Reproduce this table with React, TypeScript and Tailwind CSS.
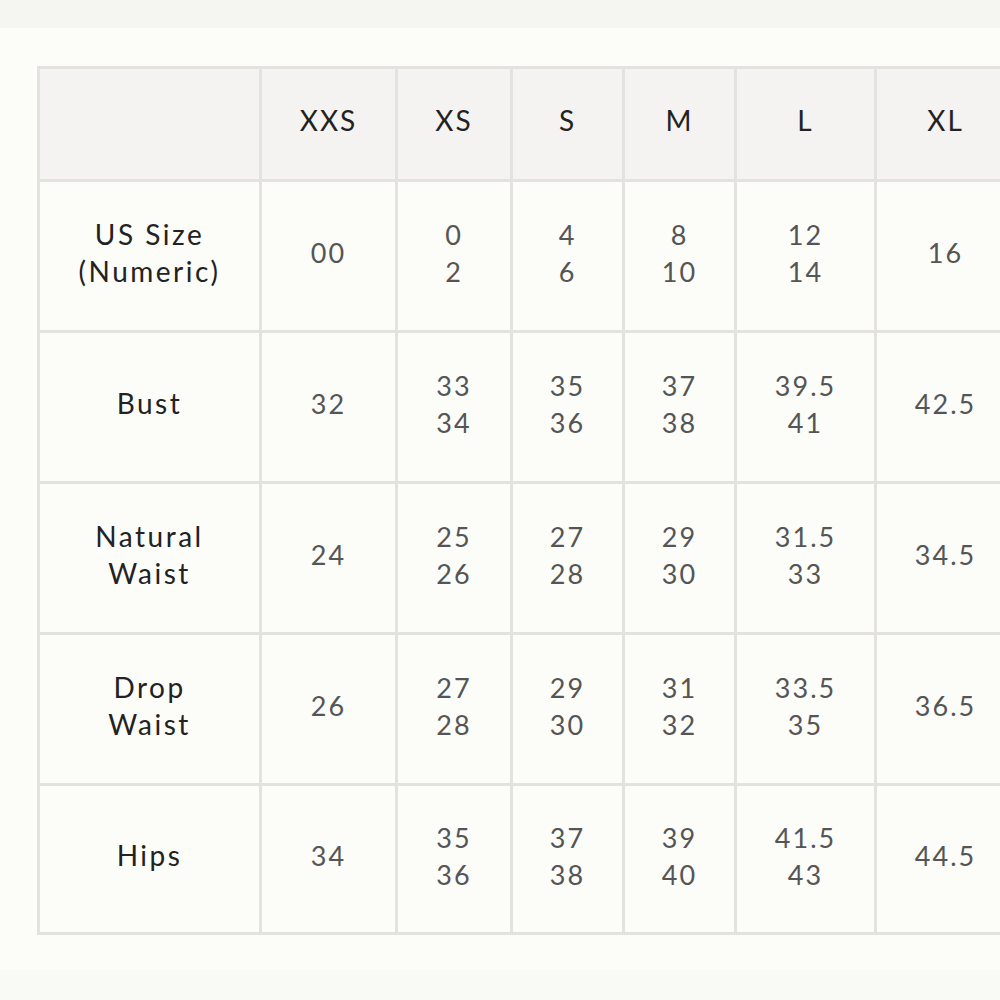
import React from "react";

const headers = ["", "XXS", "XS", "S", "M", "L", "XL"];
const rows: { label: string[]; values: string[][] }[] = [
  { label: ["US Size", "(Numeric)"], values: [["00"], ["0", "2"], ["4", "6"], ["8", "10"], ["12", "14"], ["16"]] },
  { label: ["Bust"], values: [["32"], ["33", "34"], ["35", "36"], ["37", "38"], ["39.5", "41"], ["42.5"]] },
  { label: ["Natural", "Waist"], values: [["24"], ["25", "26"], ["27", "28"], ["29", "30"], ["31.5", "33"], ["34.5"]] },
  { label: ["Drop", "Waist"], values: [["26"], ["27", "28"], ["29", "30"], ["31", "32"], ["33.5", "35"], ["36.5"]] },
  { label: ["Hips"], values: [["34"], ["35", "36"], ["37", "38"], ["39", "40"], ["41.5", "43"], ["44.5"]] },
];

export default function App() {
  return (
    <div className="w-[1000px] h-[1000px] overflow-hidden bg-[#fcfcf9] flex flex-col" style={{ fontFamily: "Lato, 'Open Sans', sans-serif" }}>
      <div className="h-[28px] bg-[#f5f5f2] shrink-0" />
      <div className="pl-[37px] pt-[38px]">
        <div className="grid w-max bg-[#e3e2df] p-[3px] gap-[3px] grid-cols-[219px_133px_112px_109px_109px_137px_137px] grid-rows-[110px_148px_148px_148px_148px_146px]">
          {headers.map((h, i) => (
            <div key={i} className="bg-[#f4f3f1] flex items-center justify-center text-[28px] tracking-[2px] text-[#222] pb-[8px]">
              {h}
            </div>
          ))}
          {rows.map((r, ri) => (
            <React.Fragment key={ri}>
              <div className="bg-[#fcfcf9] flex flex-col items-center justify-center text-[28px] leading-[37px] tracking-[2.5px] text-[#222] pb-[7px]">
                {r.label.map((l, li) => (
                  <span key={li}>{l}</span>
                ))}
              </div>
              {r.values.map((v, vi) => (
                <div key={vi} className="bg-[#fcfcf9] flex flex-col items-center justify-center text-[27px] leading-[37px] tracking-[2px] text-[#555] pb-[7px]">
                  {v.map((t, ti) => (
                    <span key={ti}>{t}</span>
                  ))}
                </div>
              ))}
            </React.Fragment>
          ))}
        </div>
      </div>
      <div className="flex-1" />
      <div className="h-[30px] bg-[#f9f9f6] shrink-0" />
    </div>
  );
}
